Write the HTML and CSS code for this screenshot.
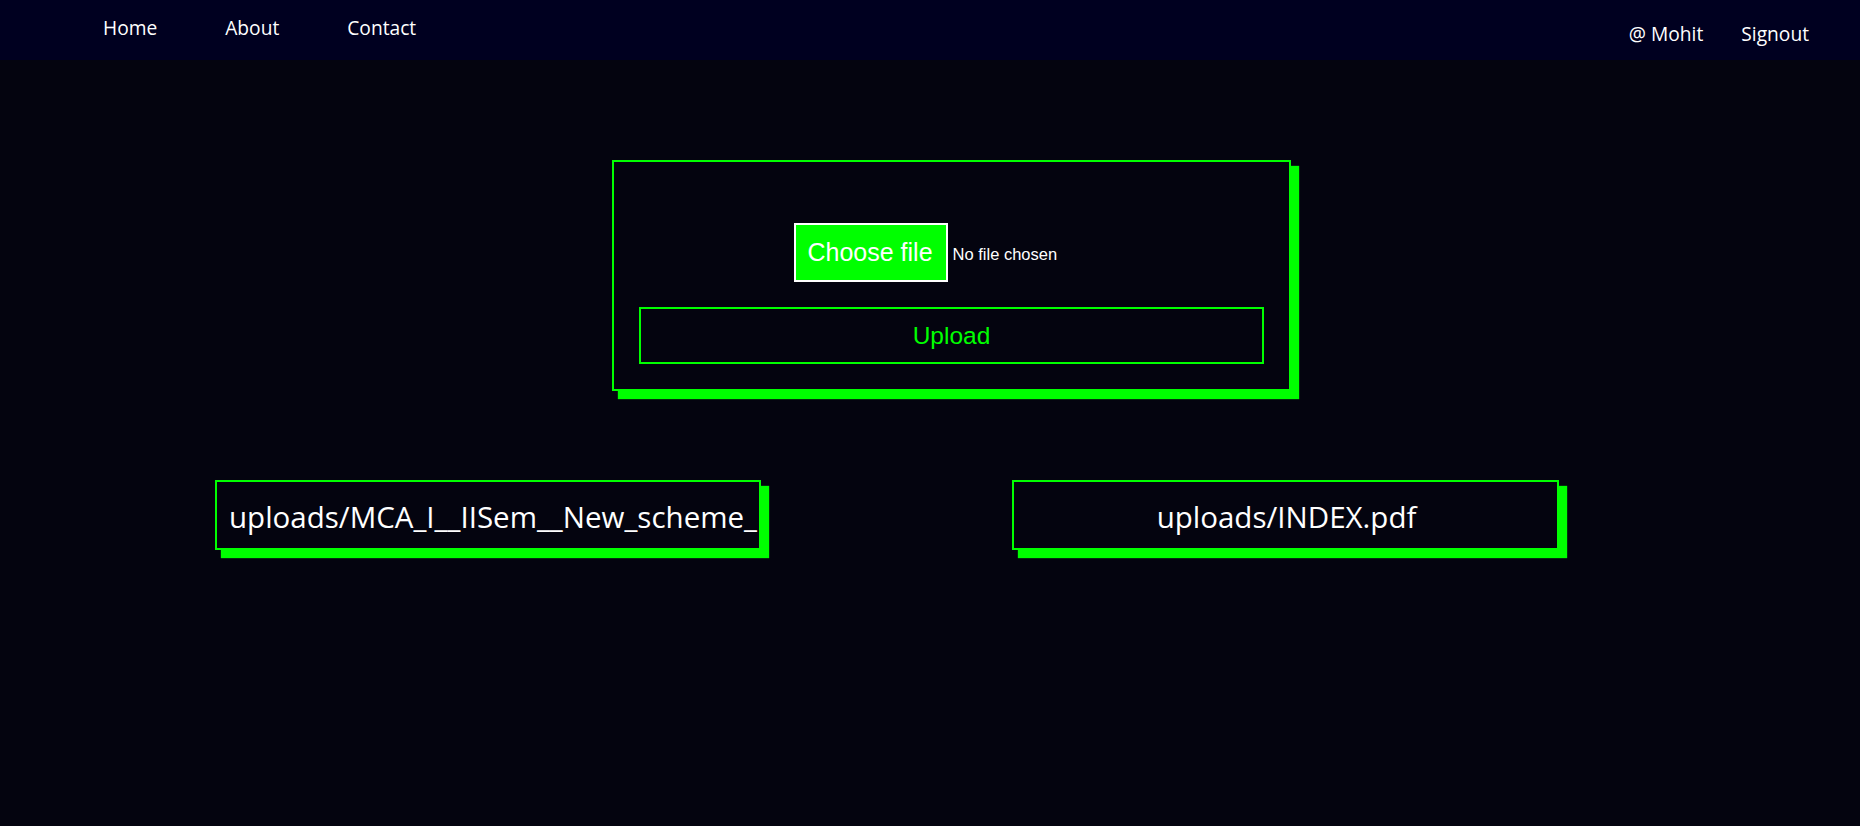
FILE: index.html
```html
<!DOCTYPE html>
<html lang="en">
<head>
<meta charset="utf-8">
<title>Uploads</title>
<link rel="stylesheet" href="styles.css">
</head>
<body>
<nav class="navbar">
  <div class="nav-left">
    <a class="nav-link" href="#">Home</a>
    <a class="nav-link" href="#">About</a>
    <a class="nav-link" href="#">Contact</a>
  </div>
  <div class="nav-right">
    <span class="nav-link">@ Mohit</span>
    <a class="nav-link" href="#">Signout</a>
  </div>
</nav>
<main class="content">
  <form class="upload-box">
    <div class="file-input">
      <span class="file-btn">Choose file</span>
      <span class="file-label">No file chosen</span>
    </div>
    <button type="button" class="upload-btn">Upload</button>
  </form>
  <section class="files">
    <div class="file-card">uploads/MCA_I__IISem__New_scheme_</div>
    <div class="file-card">uploads/INDEX.pdf</div>
  </section>
</main>
</body>
</html>
```
FILE: styles.css
```css
* { box-sizing: border-box; }
html, body {
  margin: 0;
  padding: 0;
  height: 826px;
  overflow: hidden;
}
body {
  background: #04040f;
  font-family: "Open Sans", "Noto Sans", sans-serif;
  color: #ffffff;
}
.navbar {
  height: 60px;
  background: #000020;
  display: flex;
  justify-content: space-between;
}
.nav-left {
  display: flex;
  gap: 68px;
  padding: 15px 0 0 103px;
}
.nav-right {
  display: flex;
  gap: 38px;
  padding: 21px 51px 0 0;
}
.nav-link {
  color: #ffffff;
  text-decoration: none;
  font-size: 19.2px;
  line-height: 26px;
  height: 26px;
}
.content {
  padding-top: 100px;
}
.upload-box {
  width: 679px;
  margin: 0 0 0 612px;
  border: 2px solid #00ff00;
  box-shadow: 7px 7px 1px 1px #00ff00;
  padding: 25px;
  display: flex;
  flex-direction: column;
}
.file-input {
  width: 316px;
  margin: 36px auto 0;
  display: flex;
  align-items: center;
  font-family: "Liberation Sans", Arial, sans-serif;
}
.file-btn {
  height: 59px;
  display: flex;
  align-items: center;
  padding: 0 13px 0 12px;
  background: #00ff00;
  border: 2px solid #ffffff;
  color: #ffffff;
  font-size: 25px;
}
.file-label {
  margin-left: 5px;
  font-size: 16.5px;
  color: #ffffff;
  padding-top: 4px;
}
.upload-btn {
  margin-top: 25px;
  height: 57px;
  background: transparent;
  border: 2px solid #00ff00;
  color: #00ff00;
  font-family: "Liberation Sans", Arial, sans-serif;
  font-size: 24.5px;
  padding: 0;
}
.files {
  margin-top: 89px;
  padding-left: 215px;
  display: grid;
  grid-template-columns: 546px 547px;
  column-gap: 251px;
}
.file-card {
  height: 70px;
  border: 2px solid #00ff00;
  box-shadow: 7px 7px 1px 1px #00ff00;
  padding: 4px 10px 0 12px;
  line-height: 62px;
  font-size: 29.5px;
  text-align: center;
  white-space: nowrap;
  overflow: hidden;
}
```
